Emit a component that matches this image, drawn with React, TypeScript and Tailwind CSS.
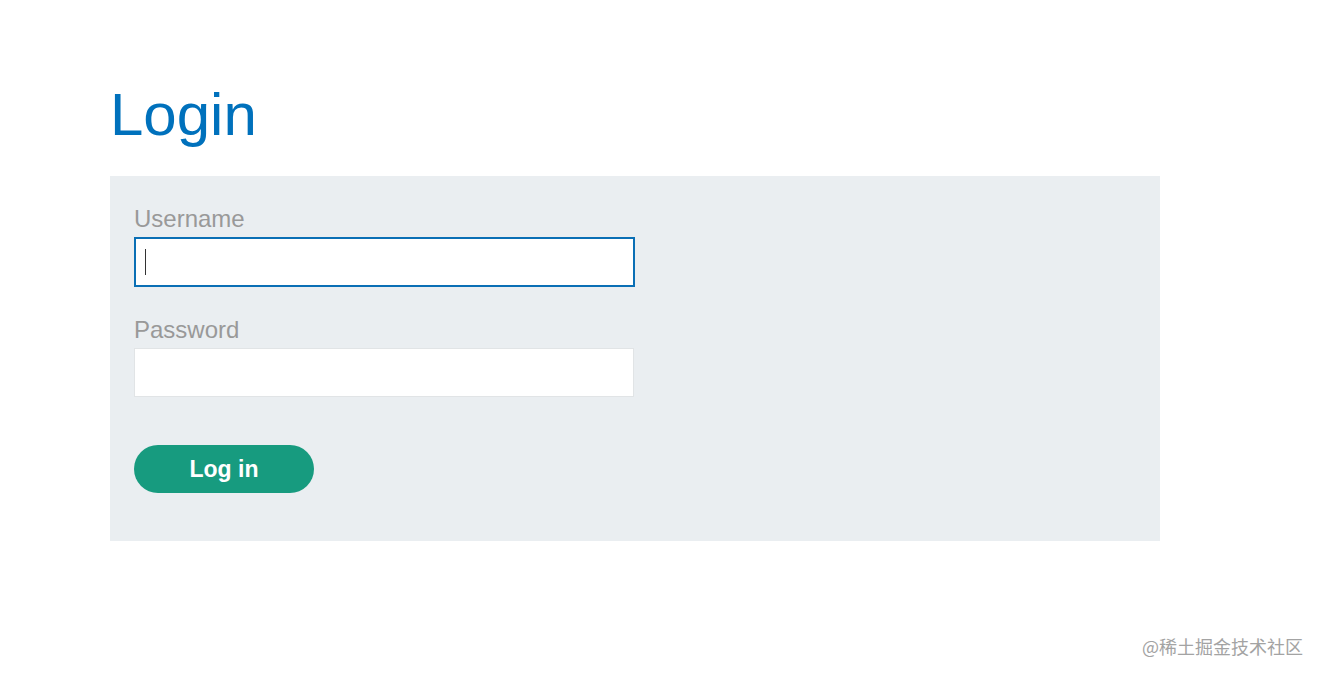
const fontStack = "font-['Liberation_Sans','Arial',sans-serif]";

export default function App() {
  return (
    <div className={`relative min-h-[677px] bg-white ${fontStack}`}>
      <div className="pl-[110px] pt-[80px]">
        {/* Heading */}
        <h1 className="text-[60px] leading-[69px] text-[#0071bc] font-normal">Login</h1>

        {/* Form panel */}
        <form
          className="mt-[27px] w-[1050px] bg-[#eaeef1] px-[24px] pt-[29px] pb-[48px]"
          onSubmit={(e) => e.preventDefault()}
        >
          <label className="block text-[24px] leading-[27px] text-[#999999]">Username</label>
          <div className="relative mt-[5px] w-[501px]">
            <input
              type="text"
              className="block h-[50px] w-full border-2 border-[#0a6fb5] bg-white px-[10px] text-[18px] caret-transparent outline-none"
            />
            <span className="absolute left-[11px] top-[12px] h-[26px] w-px bg-[#333]" />
          </div>

          <label className="mt-[29px] block text-[24px] leading-[27px] text-[#999999]">Password</label>
          <input
            type="password"
            className="mt-[5px] block h-[49px] w-[500px] border border-[#e1e4e6] bg-white px-[10px] text-[18px] outline-none"
          />

          <button
            type="submit"
            className="mt-[48px] flex h-[48px] w-[180px] items-center justify-center rounded-full bg-[#179b7f] text-[23px] font-bold text-white"
          >
            Log in
          </button>
        </form>
      </div>

      {/* Watermark */}
      <div className="absolute right-[20px] top-[633px] font-['Noto_Sans_CJK_SC',sans-serif] text-[18px] text-[#a3a3a3]">
        @稀土掘金技术社区
      </div>
    </div>
  );
}
